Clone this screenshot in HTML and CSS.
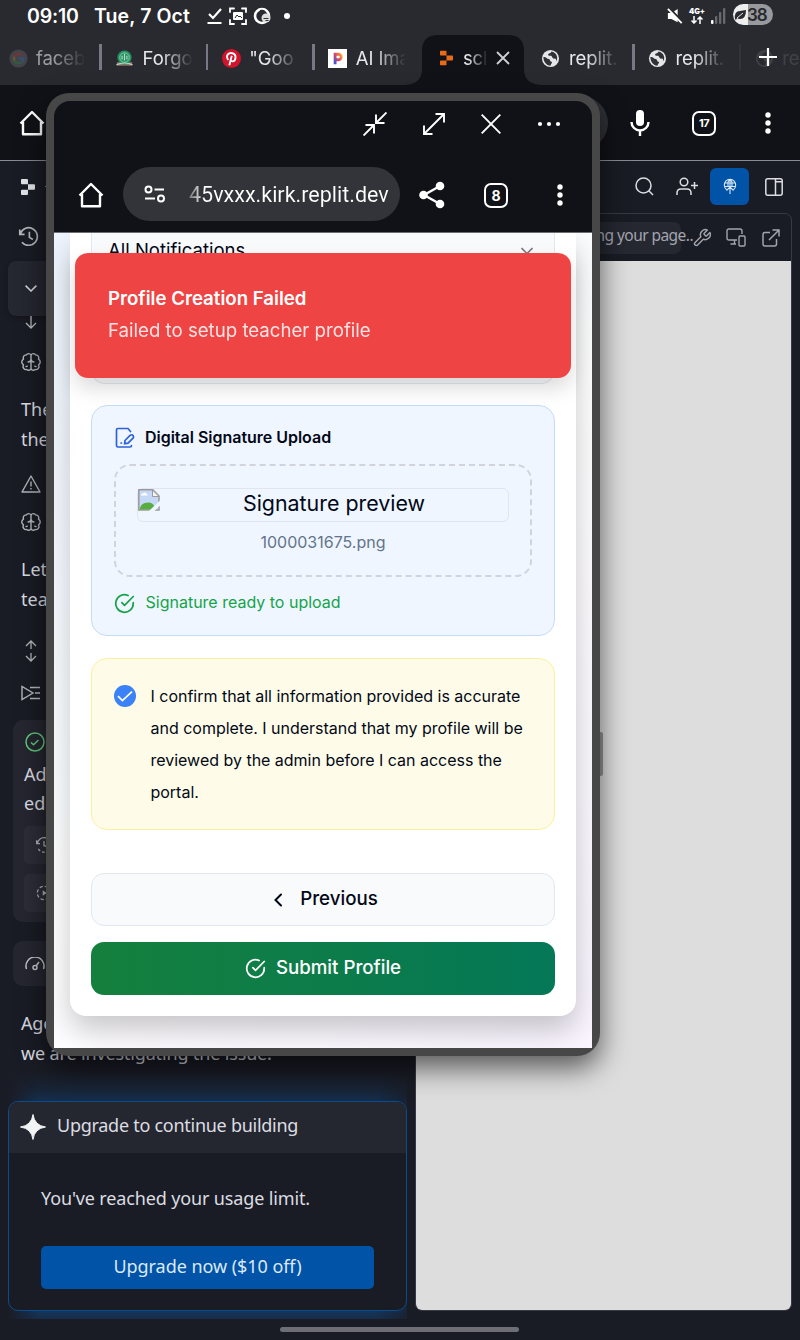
FILE: index.html
```html
<!DOCTYPE html>
<html lang="en">
<head>
<meta charset="utf-8">
<title>Replit</title>
<link rel="stylesheet" href="styles.css">
</head>
<body>
<svg class="defs" aria-hidden="true">
  <symbol id="home" viewBox="0 0 26 26"><path d="M1.5 13.5 13 2l11.5 11.5M4 12v12.3h18V12" fill="none" stroke="currentColor" stroke-width="2.4" stroke-linejoin="round"/></symbol>
  <symbol id="dots" viewBox="0 0 6 24"><circle cx="3" cy="4" r="2.7"/><circle cx="3" cy="12" r="2.7"/><circle cx="3" cy="20" r="2.7"/></symbol>
  <symbol id="globe" viewBox="0 0 20 20"><circle cx="10" cy="10" r="9" fill="#e6e6e8"/><path d="M2.500 8.500c3-.5 3.500 2 5.500 2s1 3 3.500 3c.5 1.500-1 2-1.500 4-4.500 0-7.500-4-7.500-9zM11 2.500c0 2-3.500 1.500-3.500 3.500s3.500 0 4 2 2 2.500 3 2 1.500 1 1.500 3c2.500-4 .5-9.500-5-10.500z" fill="#303137"/></symbol>
  <symbol id="brain" viewBox="0 0 24 24"><g fill="none" stroke="currentColor" stroke-width="1.7" stroke-linecap="round" stroke-linejoin="round"><path d="M12 4a3 3 0 0 0-5.500-.5A3.500 3.500 0 0 0 3 8.500 4 4 0 0 0 3 15.500 3.700 3.700 0 0 0 7 21a3 3 0 0 0 5-1zM12 4a3 3 0 0 1 5.500-.5 3.500 3.500 0 0 1 3.500 5 4 4 0 0 1 0 7 3.700 3.700 0 0 1-4 5.500 3 3 0 0 1-5-1zM8.500 12c2 0 3-1 3.500-3 .5 2 1.500 3 3.500 3M6 17.500l1.500-.5M18 17.500l-1.500-.5"/></g></symbol>
  <symbol id="history" viewBox="0 0 24 24"><path d="M2 4v5.500h5.500M2.500 9.200A10 10 0 1 1 4.500 18.500M13 6.500V13l4 2.500" fill="none" stroke="currentColor" stroke-width="1.900"/></symbol>
  <symbol id="replit" viewBox="0 0 14 16"><path d="M1 0h5q1 0 1 1v4.300H1q-1 0-1-1V1q0-1 1-1zM7 5.300h6q1 0 1 1v3.400q0 1-1 1H7zM1 10.700h6V15q0 1-1 1H1q-1 0-1-1v-3.300q0-1 1-1z" fill="currentColor"/></symbol>
  <symbol id="check-circle" viewBox="0 0 24 24"><path d="M22 11.080V12a10 10 0 1 1-5.930-9.140M22 4 12 14.010l-3-3" fill="none" stroke="currentColor" stroke-width="2" stroke-linecap="round" stroke-linejoin="round"/></symbol>
</svg>

<header class="status">
  <span class="clock">09:10</span><span class="date">Tue, 7 Oct</span>
  <svg class="notif" width="78" height="20" viewBox="0 0 78 20" fill="none" stroke="#fff"><path d="M3 8l4 4 8-9M1.500 17h14" stroke-width="2.200"/><path d="M24 6V2.500h4M36 2.500h4V6M24 14v4h4M36 18h4v-4" stroke-width="1.800" stroke-linecap="round"/><rect x="27" y="6" width="10" height="8" rx="1" fill="#fff" stroke="none"/><path d="M29 12l2-3 2 2 1-1 2 2" stroke="#292a2f"/><circle cx="56" cy="10" r="7" stroke-width="2.600"/><path d="M54 4q5-1 6 3v3l-4 4q-3-4-2-10z" fill="#292a2f" stroke="none"/><circle cx="60" cy="12" r="4.500" fill="#ddd" stroke="none"/><path d="M57.500 12.500h5M59.500 14.500h3" stroke="#333"/></svg>
  <i class="dot"></i>
  <div class="signals">
    <svg width="16" height="16" viewBox="0 0 18 17"><path d="M1 5h4l7-4.500v15L5 12H1z" fill="#fff"/><path d="M2.500-.5l15 15.500" stroke="#292a2f" stroke-width="2.500"/><path d="M1 .5l15.500 16" stroke="#fff" stroke-width="2"/></svg>
    <span class="net"><b>4G+</b><svg width="12" height="8" viewBox="0 0 12 8" fill="none" stroke="#fff" stroke-width="1.500"><path d="M3 0v7M.5 4.500 3 7l2.500-2.500M9 8V1M6.500 3.500 9 1l2.500 2.500"/></svg></span>
    <svg width="15" height="16" viewBox="0 0 15 16" fill="#68696d"><rect x="0" y="12" width="2.500" height="4" rx="1" fill="#fff"/><rect x="4" y="8" width="2.300" height="8" rx="1"/><rect x="8" y="4" width="2.300" height="12" rx="1"/><rect x="12" y="0" width="2.300" height="16" rx="1"/></svg>
    <span class="battery"><svg width="13" height="12" viewBox="0 0 13 12"><path d="M1 10Q0 2 6 2l6-1q0 9-6 9-2 0-3-1l-1 2z" fill="#292a2f"/><path d="M3 9l6-5" stroke="#eee"/></svg>38</span>
  </div>
</header>

<nav class="tabs">
  <div class="tab dim"><svg class="fav" viewBox="0 0 20 20"><circle cx="10" cy="10" r="9.500" fill="#55565b"/><g fill="none" stroke-width="2.200"><path d="M13.500 6.500A5 5 0 0 0 5.500 8" stroke="#a33b3b"/><path d="M5.500 8v4.500" stroke="#96782d"/><path d="M5.500 12.500a5 5 0 0 0 8 1" stroke="#377a4b"/><path d="M10 10h5q0 2-1.500 3.500" stroke="#3f67a8"/></g></svg><span>faceb</span></div>
  <div class="tab"><svg class="fav" viewBox="0 0 20 20"><path d="M2 14h16v3.500H2z" fill="#9a7b72"/><circle cx="10" cy="9" r="7.500" fill="#229060"/><circle cx="10" cy="9" r="5" fill="none" stroke="#8fcaa9"/><path d="M10 5v7M7.500 7v4M12.500 7v4M1.500 16.500q8.500-3.500 17 0" stroke="#b9d8c6" stroke-width="1.200" fill="none"/></svg><span>Forgo</span></div>
  <div class="tab"><svg class="fav" viewBox="0 0 20 20"><circle cx="10" cy="10" r="10" fill="#d2132c"/><path d="M6.500 11.500C3 6 8 3.500 11 4.500c5 1.500 3.500 8.500 0 8.500q-2 0-2.200-1.600M10.300 7l-2.600 10" fill="none" stroke="#fff" stroke-width="2"/></svg><span>"Goo</span></div>
  <div class="tab"><svg class="fav" viewBox="0 0 20 20"><defs><linearGradient id="pg" x1="1" y1="0" x2="0" y2="1"><stop stop-color="#ff9d31"/><stop offset=".5" stop-color="#d6496b"/><stop offset="1" stop-color="#3456dd"/></linearGradient></defs><path d="M0 0h20v20H0z" fill="#fff"/><path d="M7.500 16V5.500H11a2.700 2.700 0 0 1 0 5.800H7.500" fill="none" stroke="url(#pg)" stroke-width="3"/></svg><span>AI Ima</span></div>
  <div class="tab active"><svg class="shape" viewBox="0 0 136 50"><path d="M0 50Q17 49 17 34V16Q17 0 33 0h70q16 0 16 16v18q0 15 17 16z" fill="#111217"/></svg><svg class="fav rep" viewBox="0 0 14 16"><use href="#replit"/></svg><span>scl</span><svg class="close" viewBox="0 0 14 14"><path d="M1 1l12 12M13 1L1 13" stroke="#cfcfd3" stroke-width="1.800"/></svg></div>
  <div class="tab nosep"><svg class="fav"><use href="#globe"/></svg><span>replit.</span></div>
  <div class="tab"><svg class="fav"><use href="#globe"/></svg><span>replit.</span></div>
  <div class="tab ghost"><svg class="fav"><use href="#globe"/></svg><span>re</span></div>
  <svg class="plus" viewBox="0 0 18 18"><path d="M9 0v18M0 9h18" stroke="#fff" stroke-width="2.200"/></svg>
</nav>

<div class="toolbar">
  <svg class="ic26"><use href="#home"/></svg>
  <div class="omnibox"></div>
  <svg class="mic" viewBox="0 0 20 26"><rect x="6" y="0" width="8" height="16" rx="4" fill="#fff"/><path d="M1.500 12a8.500 8.500 0 0 0 17 0M10 20v6" fill="none" stroke="#fff" stroke-width="2.400"/></svg>
  <span class="count small">17</span>
  <svg class="vdots"><use href="#dots"/></svg>
</div>

<main class="app">
  <div class="appbar">
    <svg class="logo"><use href="#replit"/></svg>
    <span class="tick"></span>
    <div class="actions">
      <svg width="19" height="19" viewBox="0 0 19 19" fill="none" stroke="currentColor" stroke-width="1.500"><circle cx="8.500" cy="8.500" r="7.500"/><path d="M13.800 13.800l4.200 4.200"/></svg>
      <svg class="user" width="22" height="19" viewBox="0 0 22 19" fill="none" stroke="currentColor" stroke-width="1.500"><circle cx="8" cy="5" r="3.800"/><path d="M1 18v-2q0-4 4-4h6q4 0 4 4v2M18.500 5v7M15 8.500h7"/></svg>
      <span class="deploy"><svg width="14" height="17" viewBox="0 0 14 17" fill="none" stroke="#d8e7fa" stroke-width="1.100"><path d="M3.500 11.500A5.700 5.700 0 1 1 10.500 11.500M1.500 5h11M1.500 8.500h11M5 9V4q2-4 4 0v5M7 1v15M3.500 12.500l3.500-3.500 3.500 3.500"/></svg></span>
      <svg width="18" height="18" viewBox="0 0 18 18" fill="none" stroke="currentColor" stroke-width="1.500"><rect x=".8" y=".8" width="16.400" height="16.400" rx="2"/><path d="M10.500 1v16M11 3.800h6"/></svg>
    </div>
  </div>

  <div class="panes">
    <section class="chat">
      <div class="row hist"><svg class="i22"><use href="#history"/></svg></div>
      <div class="collapse"><svg width="12" height="7" viewBox="0 0 12 7"><path d="M.6.6 6 6 11.400.6" fill="none" stroke="#d4d5da" stroke-width="1.500"/></svg></div>
      <div class="row r-arrow"><svg width="12" height="13" viewBox="0 0 12 13"><path d="M6 0v12M1 7l5 5 5-5" fill="none" stroke="currentColor" stroke-width="1.300"/></svg></div>
      <div class="row r-brain"><svg class="i20"><use href="#brain"/></svg></div>
      <p>The<br>the</p>
      <div class="row r-warn"><svg width="20" height="18" viewBox="0 0 20 18" fill="none" stroke="currentColor" stroke-width="1.400" stroke-linejoin="round"><path d="M10 1l9 16H1zM10 6.500v5M10 13v1.500"/></svg></div>
      <div class="row r30"><svg class="i20"><use href="#brain"/></svg></div>
      <p class="p2">Let<br>tea</p>
      <div class="row r30 mt21"><svg width="20" height="22" viewBox="0 0 20 22" fill="none" stroke="currentColor" stroke-width="1.300"><path d="M10 9V1M5 6l5-5 5 5M10 13v8M5 16l5 5 5-5"/></svg></div>
      <div class="row r30 mt12"><svg width="20" height="16" viewBox="0 0 20 16" fill="none" stroke="currentColor" stroke-width="1.400"><path d="M1 1.500v13L12 8zM9 2.500h10M14 8h5M9 13.500h10"/></svg></div>
      <div class="done">
        <svg class="ok" width="20" height="20" viewBox="0 0 20 20" fill="none" stroke="#5fc878" stroke-width="1.500"><circle cx="10" cy="10" r="9"/><path d="M6 10.500l2.500 2.300L13.500 8"/></svg>
        <p>Ad<br>ed</p>
        <div class="sub"><svg class="i16" viewBox="0 0 24 24" fill="none" stroke="currentColor" stroke-width="1.900"><path d="M1 5v5h5M2 10a10 10 0 0 1 20 2"/><path d="M22 13a10 10 0 0 1-19 4" stroke-dasharray="4 3"/><path d="M12 6v7l4 1"/></svg></div>
        <div class="sub"><svg class="i16" viewBox="0 0 24 24"><circle cx="12" cy="12" r="10" fill="none" stroke="currentColor" stroke-width="1.800" stroke-dasharray="5 3"/><path d="M10 8l6 4-6 4z" fill="currentColor"/></svg></div>
      </div>
      <div class="gauge"><svg width="20" height="14" viewBox="0 0 20 14" fill="none" stroke="currentColor" stroke-width="1.500"><path d="M1.500 12A9 9 0 1 1 18.500 12M11 9l3-4"/><circle cx="10" cy="10.500" r="2"/></svg></div>
      <p class="p3">Age<br>we are investigating the issue.</p>
      <div class="glow">
        <div class="upgrade">
          <div class="up-head"><svg width="26" height="26" viewBox="0 0 26 26"><path d="M13 .5Q14.500 11.500 25.500 13 14.500 14.500 13 25.500 11.500 14.500.5 13 11.500 11.500 13 .5z" fill="#f2f3f5" stroke="#f2f3f5"/></svg><span>Upgrade to continue building</span></div>
          <div class="up-body"><div class="limit">You've reached your usage limit.</div><button>Upgrade now ($10 off)</button></div>
        </div>
      </div>
    </section>

    <section class="preview">
      <div class="pv-head">
        <span class="addr"><span>ng your page..</span></span>
        <svg width="20" height="20" viewBox="0 0 24 24" fill="none" stroke="currentColor" stroke-width="1.700" stroke-linejoin="round"><path d="M14.700 6.300a1 1 0 0 0 0 1.400l1.600 1.600a1 1 0 0 0 1.400 0l3.800-3.800a6 6 0 0 1-7.900 7.900l-6.900 6.900a2.100 2.100 0 0 1-3-3l6.900-6.900a6 6 0 0 1 7.900-7.900z"/></svg>
        <svg width="20" height="19" viewBox="0 0 20 19" fill="none" stroke="currentColor" stroke-width="1.400"><path d="M11 12H3q-2 0-2-2V3q0-2 2-2h11q2 0 2 2v3M8.500 12v4M4.500 16H10"/><rect x="13" y="8" width="6" height="10" rx="1"/></svg>
        <svg width="18" height="18" viewBox="0 0 18 18" fill="none" stroke="currentColor" stroke-width="1.500"><path d="M10.500 1H17v6.500M17 1 7 11M8 3.500H3q-2 0-2 2V15q0 2 2 2h9.500q2 0 2-2v-5"/></svg>
      </div>
      <div class="pv-body"></div>
    </section>
  </div>
  <div class="pill"></div>
</main>

<div class="handle"></div>
<div class="window">
  <div class="win-top">
    <div class="controls">
      <svg width="24" height="24" viewBox="0 0 24 24"><path d="M23.500.5 13 11M13 2.500V11H21.500M.5 23.500 11 13M11 21.500V13H2.500"/></svg>
      <svg width="22" height="22" viewBox="0 0 22 22"><path d="M1 21 21 1M12.500 1H21v8.500M1 12.500V21h8.500"/></svg>
      <svg width="20" height="20" viewBox="0 0 20 20"><path d="M.7.7l18.600 18.600M19.300.7.7 19.300"/></svg>
      <svg class="hd" width="24" height="6" viewBox="0 0 24 6"><circle cx="3" cy="3" r="2.100"/><circle cx="12" cy="3" r="2.100"/><circle cx="21" cy="3" r="2.100"/></svg>
    </div>
    <div class="urlbar">
      <svg class="ic26"><use href="#home"/></svg>
      <div class="url"><svg width="22" height="18" viewBox="0 0 22 18" fill="none" stroke="#fff" stroke-width="2"><circle cx="4.500" cy="4.500" r="3"/><path d="M10.500 4.500H20M1 13.500h10"/><circle cx="17" cy="13.500" r="3"/></svg><span>45vxxx.kirk.replit.dev</span></div>
      <svg class="share" viewBox="0 0 26 28"><path d="M21 5 5 14l16 9" fill="none" stroke="#fff" stroke-width="2.400"/><g fill="#fff"><circle cx="21" cy="5" r="4.300"/><circle cx="4.500" cy="14" r="4.300"/><circle cx="21" cy="23" r="4.300"/></g></svg>
      <span class="count">8</span>
      <svg class="vdots"><use href="#dots"/></svg>
    </div>
  </div>
  <div class="page">
    <div class="card">
      <div class="select"><span>All Notifications</span><svg width="12" height="8" viewBox="0 0 12 8"><path d="M.5 1 6 6.500 11.500 1" fill="none" stroke="#777d88" stroke-width="1.700"/></svg></div>
      <div class="sig">
        <div class="sig-title"><svg width="20" height="22" viewBox="0 0 20 22" fill="none" stroke="#2e62d9" stroke-width="1.700" stroke-linecap="round"><path d="M15.500 4.500 13 1.500H3q-1.500 0-1.500 1.500v15.500q0 1.500 1.500 1.500h12q1.500 0 1.500-1.500M6 16h.5"/><path d="M10 13.500l5-5q2-1.500 3 0t0 2.700l-5 5-3.300.5z"/></svg><span>Digital Signature Upload</span></div>
        <div class="drop">
          <div class="img"><svg width="22" height="22" viewBox="0 0 22 22"><path d="M.8.8h14L21 7v14H.8z" fill="#c5d8f6" stroke="#9b9b9f" stroke-width="1.500"/><path d="M3 6.500q0-2.500 2-2 2-2 3 0 2 0 1.500 2z" fill="#fff"/><path d="M1.500 20.500q1-7 9-7 4 0 6 4l-4 3z" fill="#59ac3f"/><path d="M14.500 1v6.500H21z" fill="#f4f4f4" stroke="#9b9b9f"/><path d="M11 22 22 11.500v5L16.500 22z" fill="#eff6ff"/></svg><span>Signature preview</span></div>
          <div class="file">1000031675.png</div>
        </div>
        <div class="ready"><svg width="21" height="21"><use href="#check-circle"/></svg><span>Signature ready to upload</span></div>
      </div>
      <div class="confirm">
        <svg width="22" height="22" viewBox="0 0 22 22"><circle cx="11" cy="11" r="11" fill="#3b82f6"/><path d="M4 11.200l4.400 4.400L18 6.600" fill="none" stroke="#fff" stroke-width="1.700"/></svg>
        <div>I confirm that all information provided is accurate<br>and complete. I understand that my profile will be<br>reviewed by the admin before I can access the<br>portal.</div>
      </div>
      <button class="prev"><svg width="8" height="14" viewBox="0 0 8 14"><path d="M7 1.500 1.500 7 7 12.500" fill="none" stroke="#020817" stroke-width="2" stroke-linecap="round"/></svg><span>Previous</span></button>
      <button class="submit"><svg width="21" height="21"><use href="#check-circle"/></svg><span>Submit Profile</span></button>
    </div>
    <div class="toast"><strong>Profile Creation Failed</strong><span>Failed to setup teacher profile</span></div>
  </div>
</div>
</body>
</html>
```
FILE: styles.css
```css
* { box-sizing: border-box; }
body { margin: 0; width: 800px; height: 1340px; overflow: hidden; position: relative; background: #1a1c25; font-family: Inter, sans-serif; display: flex; flex-direction: column; }
svg { flex: none; display: block; }
button { font: inherit; border: 0; margin: 0; padding: 0; }
.defs { position: absolute; width: 0; height: 0; }

.status { height: 33px; flex: none; background: #292a2f; display: flex; align-items: center; padding: 0 27px 1px; color: #fff; font-weight: 600; font-size: 19.500px; }
.clock { width: 67px; letter-spacing: -.2px; }
.date { width: 112px; letter-spacing: .1px; white-space: nowrap; }
.dot { width: 6px; height: 6px; border-radius: 50%; background: #fff; }
.signals { margin-left: auto; display: flex; align-items: center; gap: 6px; }
.net { display: flex; flex-direction: column; align-items: center; width: 16px; font-size: 7.500px; line-height: 8px; }
.battery { width: 40px; height: 21px; margin-top: -3px; margin-left: 1px; border-radius: 11px; background: linear-gradient(90deg, #eee 15px, #98999c 15px); color: #292a2f; display: flex; align-items: center; padding-left: 1px; font-size: 17px; letter-spacing: -1px; }

.tabs { height: 52px; flex: none; background: #292a2f; display: flex; padding: 2px 0 0; position: relative; overflow: hidden; }
.tabs .tab:first-child { margin-left: -7.500px; }
.tab { width: 106.600px; flex: none; height: 48px; display: flex; align-items: center; gap: 8px; padding-left: 15.500px; position: relative; color: #e8e8eb; font-size: 18.500px; letter-spacing: -.1px; }
.tab span { width: 52px; white-space: nowrap; margin-top: -2px; -webkit-mask-image: linear-gradient(90deg, #000 35%, transparent 96%); mask-image: linear-gradient(90deg, #000 35%, transparent 96%); }
.tab:not(.active):not(.nosep):not(:first-child)::before { content: ""; position: absolute; left: 0; top: 9px; width: 2.500px; height: 26px; background: #777a86; }
.fav { width: 19px; height: 19px; margin: -2px .5px 0; }
.tab.dim { opacity: .6; }
.tab.ghost { opacity: .12; }
.shape { position: absolute; left: -14px; top: 0; width: 136px; height: 50px; }
.active .rep { width: 13px; height: 16px; color: #e96b17; position: relative; margin: -2px 2px 0 5.500px; }
.active span { position: relative; width: 24px; -webkit-mask-image: linear-gradient(90deg, #000 20%, transparent 105%); mask-image: linear-gradient(90deg, #000 20%, transparent 105%); }
.close { width: 14px; height: 14px; position: relative; margin-left: 1px; margin-top: -2px; }
.plus { position: absolute; left: 759px; top: 15px; width: 18px; height: 18px; }

.toolbar { height: 76px; flex: none; background: #111217; border-bottom: 1px solid #898b94; display: flex; align-items: center; padding: 0 29px 0 19px; color: #fff; }
.ic26 { width: 26px; height: 26px; }
.omnibox { width: 530px; height: 54px; margin-left: 33px; border-radius: 27px; background: #2f3036; }
.mic { width: 20px; height: 26px; margin-left: 22px; }
.count { width: 24px; height: 25px; margin-top: 1px; border: 2.500px solid #fff; border-radius: 7px; display: flex; align-items: center; justify-content: center; font-size: 14px; font-weight: 700; color: #fff; }
.count.small { font-size: 11px; margin-left: 42px; letter-spacing: -.5px; }
.vdots { width: 6px; height: 24px; fill: #fff; }
.toolbar .vdots { margin-left: 49px; }

.app { flex: 1; min-height: 0; color: #dcdde2; display: flex; flex-direction: column; font-family: "Noto Sans", sans-serif; }
.appbar { height: 52px; flex: none; display: flex; align-items: center; padding: 0 17px 1px 21px; }
.logo { width: 14px; height: 16px; color: #e4e5ea; }
.tick { width: 4px; height: 1px; background: #888; margin-left: 10px; }
.actions { margin-left: auto; display: flex; align-items: center; }
.user { margin-left: 22px; }
.deploy { width: 39px; height: 37px; margin: 0 16px 0 12px; border-radius: 6px; background: #0053a6; display: flex; align-items: center; justify-content: center; }
.panes { flex: 1; min-height: 0; display: flex; }
.chat { width: 415px; flex: none; padding: 0 8px; display: flex; flex-direction: column; font-size: 18px; }
.chat p { margin: 0 0 0 13px; line-height: 30px; white-space: nowrap; transform: translateY(-1px); }
.row { display: flex; align-items: center; padding-left: 13px; color: #b4b6be; flex: none; }
.hist { height: 48px; padding: 0 0 1px 10px; }
.i22 { width: 21px; height: 21px; }
.i20 { width: 20px; height: 20px; }
.i16 { width: 16px; height: 16px; }
.collapse { height: 55px; flex: none; background: #252731; border-radius: 8px; display: flex; align-items: center; padding-left: 17px; box-shadow: 0 2px 5px #0004; }
.r-arrow { height: 12px; padding-left: 17px; }
.r-brain { height: 67px; }
.r-warn { height: 44px; margin-top: 8px; padding-bottom: 2px; }
.r30 { height: 30px; }
.mt21 { margin-top: 21px; }
.mt12 { margin-top: 12px; }
.chat .p2 { margin-top: 18px; }
.done { height: 202px; flex: none; margin: 12px 0 0 5px; border-radius: 10px; background: #252630; padding: 12px 11px; display: flex; flex-direction: column; color: #b4b6be; }
.done .ok { margin-left: 1px; }
.done p { margin: 8px 0; line-height: 29px; color: #dcdde2; transform: none; }
.sub { height: 38px; flex: none; margin-bottom: 10px; background: #2c2d38; border-radius: 5px; padding: 11px 12px; }
.gauge { height: 45px; flex: none; margin: 19px 0 0 5px; border-radius: 10px; background: #252630; display: flex; align-items: center; padding-left: 12px; color: #c5c6cc; }
.chat .p3 { margin-top: 23px; letter-spacing: -.15px; }
.glow { margin-top: 2px; padding: 30px 0 8px; flex: none; width: 399px; background: linear-gradient(90deg, #1a1c25 0, #1a1c2500 30px, #1a1c2500 369px, #1a1c25aa 399px), linear-gradient(180deg, #1a1c25 0, #182436 18px, #152f4e 31px, #14355b 240px, #182d49 100%); }
.upgrade { height: 210px; border: 1px solid #0d4c8c; border-radius: 10px; background: #1a1c25; overflow: hidden; }
.up-head { height: 51px; background: #252730; display: flex; align-items: center; gap: 11px; padding: 0 11px 2px; letter-spacing: -.27px; }
.up-head span { margin-top: -3px; }
.up-head svg { margin-top: 1px; }
.up-body { padding: 29px 32px; letter-spacing: -.14px; }
.limit { height: 32px; line-height: 32px; margin-bottom: 32px; }
.upgrade button { width: 333px; height: 43px; display: block; border-radius: 5px; background: #0053a6; color: #dce9f8; padding-bottom: 4px; letter-spacing: -.05px; }

.preview { width: 377px; height: 1098px; border: 1px solid #373945; border-radius: 7px; overflow: hidden; display: flex; flex-direction: column; }
.pv-head { height: 47px; flex: none; display: flex; align-items: center; justify-content: flex-end; padding-right: 11px; color: #a3a5ae; }
.pv-head svg:nth-of-type(1) { margin-right: -1px; }
.pv-head svg:nth-of-type(2) { margin: 0 16px 0 15px; }
.addr { width: 230px; height: 32px; margin-right: 11px; border-radius: 7px; background: #252731; font-size: 15.500px; letter-spacing: -.55px; line-height: 26px; display: flex; justify-content: flex-end; }
.addr span { margin-right: -12px; white-space: nowrap; }
.pv-body { flex: 1; background: #ddd; }
.pill { position: absolute; left: 280px; top: 1327px; width: 239px; height: 5px; border-radius: 3px; background: #6e6f76; }

.handle { position: absolute; left: 590px; top: 732px; width: 13px; height: 44px; border-radius: 2px; background: #949496; }
.window { position: absolute; left: 46px; top: 93px; width: 554px; height: 963px; padding: 8px; border-radius: 23px; background: #474747; box-shadow: 0 12px 28px #0009; display: flex; flex-direction: column; }
.win-top { height: 132px; flex: none; background: #111217; border-radius: 16px 16px 0 0; border-bottom: 1px solid #6d6e73; }
.controls { height: 46px; display: flex; justify-content: flex-end; align-items: center; gap: 36px; padding-right: 31px; fill: none; stroke: #fff; stroke-width: 1.900; }
.controls .hd { fill: #fff; stroke: none; }
.urlbar { height: 54px; margin-top: 20px; padding-left: 24px; display: flex; align-items: center; color: #fff; }
.urlbar .ic26 { margin-top: 2px; }
.url { width: 277px; height: 54px; margin-left: 19px; border-radius: 27px; background: #333439; display: flex; align-items: center; padding-left: 21px; gap: 23px; font-family: Roboto, sans-serif; font-size: 21.500px; }
.url span { width: 200px; white-space: nowrap; background: linear-gradient(90deg, #777, #fff 16px); -webkit-background-clip: text; background-clip: text; color: transparent; }
.share { width: 26px; height: 28px; margin-left: 19px; margin-top: 1px; }
.urlbar .count { margin-left: 39px; margin-top: 2px; }
.urlbar .vdots { margin-left: 49px; margin-top: 2px; }
.page { flex: 1; min-height: 0; position: relative; overflow: hidden; padding: 0 16px 32px; background: linear-gradient(135deg, #eff6ff, #fff 50%, #faf5ff); }
.card { height: 783px; background: #fff; border-radius: 0 0 16px 16px; box-shadow: 0 14px 30px #00000038; padding: 0 21px; color: #020817; }
.select { height: 151px; border: 1px solid #e2e8f0; border-top: 0; border-radius: 0 0 14px 14px; background: #f8fafc; display: flex; justify-content: space-between; padding: 4px 21px 0 16px; font-size: 18.500px; line-height: 26px; }
.select svg { margin-top: 10px; }
.sig { height: 231px; margin-top: 21px; border: 1px solid #c3dcf8; border-radius: 16px; background: #eff6ff; padding: 22px; }
.sig-title { height: 20px; display: flex; align-items: center; gap: 10px; padding-left: 1px; font-size: 16px; letter-spacing: -.02px; font-weight: 600; }
.sig-title span { margin-top: -2px; }
.ready span { margin-top: -3px; }
.drop { height: 113px; width: 418px; margin-top: 16px; border: 2px dashed #d1d5db; border-radius: 16px; padding: 22px 21px; }
.img { height: 34px; border: 1px solid #e2e5ee; border-radius: 6px; display: flex; font-size: 21.400px; line-height: 29px; }
.img span { flex: 1; text-align: center; }
.file { margin-top: 8px; line-height: 24px; text-align: center; font-size: 16px; color: #64748b; }
.ready { margin-top: 16px; display: flex; align-items: center; gap: 10.500px; color: #16a34a; font-size: 16px; }
.confirm { height: 172px; margin-top: 22px; border: 1px solid #fbf0a0; border-radius: 16px; background: #fefce8; padding: 21px 22px; display: flex; gap: 15px; font-size: 16px; letter-spacing: -.015px; line-height: 32px; white-space: nowrap; }
.confirm svg { margin-top: 5px; margin-left: -.5px; }
.card button { width: 464px; height: 53px; display: flex; align-items: center; justify-content: center; border-radius: 13px; font-size: 18.700px; font-weight: 500; color: #020817; }
.card button span { margin-top: -2px; }
.card .prev { margin-top: 43px; border: 1px solid #e2e8f0; background: #f8fafc; gap: 18px; padding-left: 6px; }
.card .submit { margin-top: 16px; background: linear-gradient(90deg, #15803d, #047857); color: #fff; gap: 10px; }
.toast { position: absolute; left: 21px; top: 20px; width: 496px; height: 125px; border-radius: 13px; background: #ef4444; box-shadow: 0 10px 20px #00000025; color: #fff; padding: 29px 33px; font-size: 18.650px; line-height: 32px; display: flex; flex-direction: column; }
.toast strong { font-weight: 600; }
.toast span { opacity: .85; }
```
